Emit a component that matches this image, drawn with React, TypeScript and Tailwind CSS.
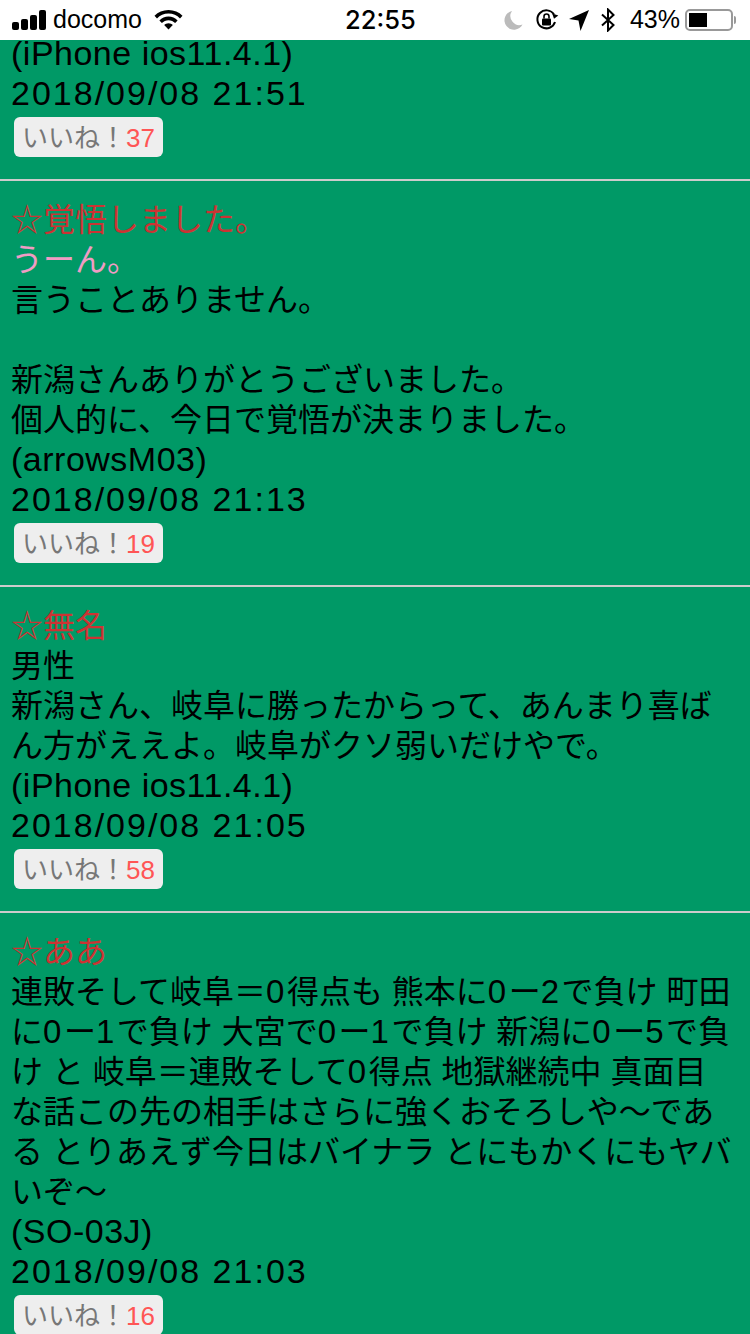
const cjk = "font-['Liberation_Sans','Noto_Sans_CJK_JP',sans-serif]";

interface PostProps {
  name: string;
  title?: string;
  lines: string[];
  device: string;
  date: string;
  likes: number;
}

// digits in the reference's font are wider than Liberation's
const BodyLine = ({ text }: { text: string }) => (
  <div className="h-10 whitespace-nowrap leading-10">
    {text.split(/(\d+)/).map((part, i) =>
      /\d/.test(part) ? (
        <span key={i} className="text-[33px] tracking-[2.5px]">
          {part}
        </span>
      ) : (
        part
      ),
    )}
  </div>
);

const DeviceLine = ({ text }: { text: string }) => (
  <div className="h-10 whitespace-nowrap text-[34px] leading-[38px] tracking-[0.5px]">{text}</div>
);

const DateLine = ({ text }: { text: string }) => (
  <div className="h-10 whitespace-nowrap text-[34px] leading-[38px] tracking-[2px]">{text}</div>
);

const LikeButton = ({ likes }: { likes: number }) => (
  <div className="ml-[3px] mt-[3px] flex h-10 w-[149px] items-center justify-between rounded-[6px] bg-[#eeeeee] pl-[8px] pr-[9px] leading-10 text-[#777777]">
    <span className="whitespace-nowrap pt-[2px] text-[26px]">いいね！</span>
    <span className="pt-[1px] text-[26px] text-[#ff5555]">{likes}</span>
  </div>
);

const Post = ({ name, title, lines, device, date, likes }: PostProps) => (
  <div className="border-b-2 border-[#cccccc] pb-[22px] pl-[11px] pt-[19px]">
    <div className="h-10 whitespace-nowrap leading-10 text-[#cc3333]">☆{name}</div>
    {title && <div className="h-10 whitespace-nowrap leading-10 text-[#f09cc4]">{title}</div>}
    {lines.map((line, i) => (
      <BodyLine key={i} text={line} />
    ))}
    <DeviceLine text={device} />
    <DateLine text={date} />
    <LikeButton likes={likes} />
  </div>
);

const StatusBar = () => (
  <div className="relative z-10 flex h-10 items-center justify-between bg-white pl-3 pr-[14px] text-black">
    <div className="flex items-center">
      <div className="flex items-end gap-[2px]">
        <div className="h-[8px] w-[7px] rounded-[2px] bg-black" />
        <div className="h-[11px] w-[7px] rounded-[2px] bg-black" />
        <div className="h-[15px] w-[7px] rounded-[2px] bg-black" />
        <div className="h-[20px] w-[7px] rounded-[2px] bg-black" />
      </div>
      <span className="ml-[7px] text-[25px]">docomo</span>
      <svg className="ml-[12px]" width="29" height="20" viewBox="0 0 29 20">
        <path d="M14.5 0C9 0 4 2.2 0.5 5.7L3 8.4C6 5.4 10 3.6 14.5 3.6S23 5.4 26 8.4L28.5 5.7C25 2.2 20 0 14.5 0Z" fill="#000" />
        <path d="M14.5 6.6C11 6.6 7.8 8 5.4 10.4L7.9 13C9.6 11.3 11.9 10.2 14.5 10.2S19.4 11.3 21.1 13L23.6 10.4C21.2 8 18 6.6 14.5 6.6Z" fill="#000" />
        <path d="M14.5 13.2C12.8 13.2 11.3 13.9 10.2 15L14.5 19.6L18.8 15C17.7 13.9 16.2 13.2 14.5 13.2Z" fill="#000" />
      </svg>
    </div>
    <div className="absolute left-[345px] top-0 font-['Inter',sans-serif] text-[25.5px] font-medium leading-10">22:55</div>
    <div className="flex items-center">
      <svg width="19" height="20" viewBox="0 0 19 20">
        <path d="M8 1A9.5 9.5 0 1 0 18.5 14.5A9 9 0 0 1 8 1Z" fill="#bbbbbb" />
      </svg>
      <svg className="ml-[12px]" width="24" height="24" viewBox="0 0 24 24" fill="none">
        <path d="M20 14A9 9 0 1 1 19 6.5" stroke="#000" strokeWidth="2" />
        <path d="M16.5 6.5H23L20 11Z" fill="#000" transform="rotate(20 20 8)" />
        <rect x="7" y="10.5" width="9" height="7" rx="1" fill="#000" />
        <path d="M9 10.5V8.5A2.5 2.5 0 0 1 14 8.5V10.5" stroke="#000" strokeWidth="1.6" />
      </svg>
      <svg className="ml-[10px]" width="20" height="21" viewBox="0 0 20 21">
        <path d="M20 0L11.5 21L9.5 10.5L0 9Z" fill="#000" />
      </svg>
      <svg className="ml-[12px]" width="14" height="24" viewBox="0 0 14 24" fill="none">
        <path d="M1 6.5L12.5 17L7 22.5V1.5L12.5 7L1 17.5" stroke="#000" strokeWidth="2" />
      </svg>
      <span className="ml-[15px] text-[25px]">43%</span>
      <div className="ml-[5px] flex h-[22px] w-[48px] items-center rounded-[5px] border-2 border-[#999999] p-[2px]">
        <div className="h-full w-[18px] bg-black" />
      </div>
      <div className="ml-[1px] h-[8px] w-[2px] rounded-r-sm bg-[#999999]" />
    </div>
  </div>
);

export default function App() {
  return (
    <div className={`h-[1334px] w-[750px] overflow-hidden bg-[#009966] text-[32px] text-black ${cjk}`}>
      <StatusBar />
      {/* list is scrolled: the first post's top is cut off under the bar */}
      <div className="-mt-[6px]">
        <div className="border-b-2 border-[#cccccc] pb-[22px] pl-[11px]">
          <DeviceLine text="(iPhone ios11.4.1)" />
          <DateLine text="2018/09/08 21:51" />
          <LikeButton likes={37} />
        </div>
        <Post
          name="覚悟しました。"
          title="うーん。"
          lines={["言うことありません。", "\u00a0", "新潟さんありがとうございました。", "個人的に、今日で覚悟が決まりました。"]}
          device="(arrowsM03)"
          date="2018/09/08 21:13"
          likes={19}
        />
        <Post
          name="無名"
          lines={["男性", "新潟さん、岐阜に勝ったからって、あんまり喜ば", "ん方がええよ。岐阜がクソ弱いだけやで。"]}
          device="(iPhone ios11.4.1)"
          date="2018/09/08 21:05"
          likes={58}
        />
        <Post
          name="ああ"
          lines={[
            "連敗そして岐阜＝0得点も 熊本に0ー2で負け 町田",
            "に0ー1で負け 大宮で0ー1で負け 新潟に0ー5で負",
            "け と 岐阜＝連敗そして0得点 地獄継続中 真面目",
            "な話この先の相手はさらに強くおそろしや〜であ",
            "る とりあえず今日はバイナラ とにもかくにもヤバ",
            "いぞ〜",
          ]}
          device="(SO-03J)"
          date="2018/09/08 21:03"
          likes={16}
        />
      </div>
    </div>
  );
}
